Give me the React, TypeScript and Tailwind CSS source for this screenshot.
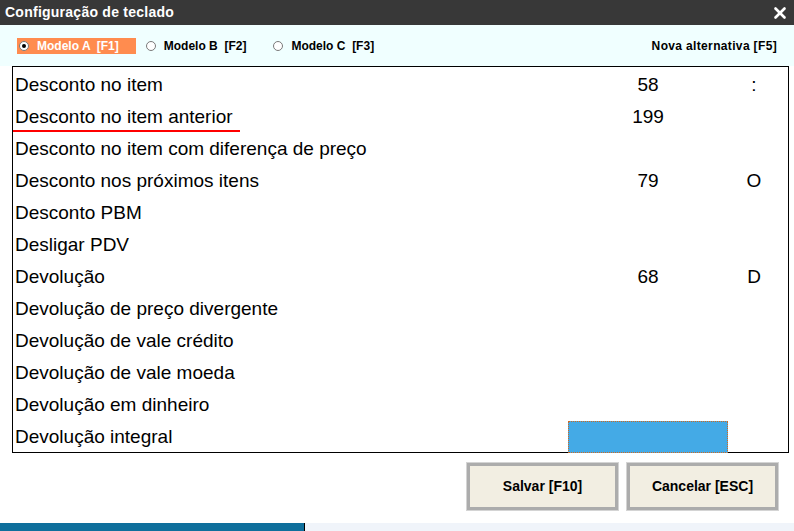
import { X } from 'lucide-react';

type Row = { label: string; code?: string; key?: string; selected?: boolean; underline?: boolean };

const rows: Row[] = [
  { label: 'Desconto no item', code: '58', key: ':' },
  { label: 'Desconto no item anterior', code: '199', underline: true },
  { label: 'Desconto no item com diferença de preço' },
  { label: 'Desconto nos próximos itens', code: '79', key: 'O' },
  { label: 'Desconto PBM' },
  { label: 'Desligar PDV' },
  { label: 'Devolução', code: '68', key: 'D' },
  { label: 'Devolução de preço divergente' },
  { label: 'Devolução de vale crédito' },
  { label: 'Devolução de vale moeda' },
  { label: 'Devolução em dinheiro' },
  { label: 'Devolução integral', selected: true },
];

const models = [
  { label: 'Modelo A', key: '[F1]', active: true },
  { label: 'Modelo B', key: '[F2]' },
  { label: 'Modelo C', key: '[F3]' },
];

const Radio = ({ checked }: { checked?: boolean }) => (
  <span className="w-[10px] h-[10px] rounded-full bg-white border border-[#7a7a7a] flex items-center justify-center shrink-0">
    {checked && <span className="w-[4px] h-[4px] rounded-full bg-black" />}
  </span>
);

export default function App() {
  return (
    <div className="w-[794px] h-[531px] flex flex-col bg-white font-['Liberation_Sans',Arial,sans-serif] overflow-hidden">
      {/* Title bar */}
      <div className="h-[25px] bg-[#383838] flex items-center justify-between pl-[5px] pr-[5px] shrink-0">
        <span className="text-white font-bold text-[14px] tracking-[0.25px]">Configuração de teclado</span>
        <X size={18} strokeWidth={3.5} className="text-white" />
      </div>

      {/* Keyboard model selector */}
      <div className="h-[41px] bg-[#f0ffff] flex items-center pl-[17px] pr-[17px] text-[12px] font-bold shrink-0">
        {models.map((m) => (
          <div
            key={m.label}
            className={`flex items-center h-[16px] pl-[2px] pr-[17px] mr-[8px] gap-[8px] ${m.active ? 'bg-[#ff8c4f] text-white' : 'text-black'}`}
          >
            <Radio checked={m.active} />
            <span className="whitespace-pre">{m.label}  {m.key}</span>
          </div>
        ))}
        <span className="ml-auto text-black tracking-[0.35px]">Nova alternativa [F5]</span>
      </div>

      {/* Function list */}
      <div className="ml-[12px] mr-[5px] h-[387px] border border-black bg-white pt-[2px] shrink-0">
        {rows.map((r) => (
          <div key={r.label} className="relative h-[32px] flex items-center text-[19px] text-black">
            <span className="pl-[2px] flex-1">{r.label}</span>
            <span className="w-[160px] h-full flex items-center justify-center">
              {r.selected ? (
                <span className="w-full h-full bg-[#44aae6] border border-dotted border-[#d2691e]" />
              ) : (
                r.code
              )}
            </span>
            <span className="w-[52px] text-center mr-[8px]">{r.key}</span>
            {r.underline && <span className="absolute left-0 top-[29px] w-[227px] h-[2px] bg-[#ff0000]" />}
          </div>
        ))}
      </div>

      {/* Actions */}
      <div className="flex justify-end gap-[9px] pr-[16px] pt-[10px] shrink-0">
        {['Salvar [F10]', 'Cancelar [ESC]'].map((b) => (
          <button
            key={b}
            className="w-[151px] h-[47px] bg-[#f2eee2] border-[3px] border-[#acacac] outline outline-1 outline-[#d4d4d4] text-[14px] font-bold text-black"
          >
            {b}
          </button>
        ))}
      </div>

      {/* Status strip */}
      <div className="mt-auto h-[8px] flex shrink-0">
        <div className="w-[305px] bg-[#0e6f9c] border-r border-black" />
        <div className="flex-1 bg-[#f0f4fa]" />
      </div>
    </div>
  );
}
